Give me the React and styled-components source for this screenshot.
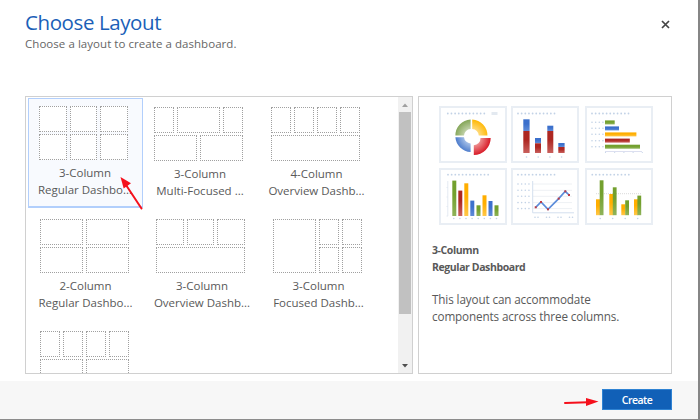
import React, { useState } from "react";
import styled, { createGlobalStyle } from "styled-components";

const GlobalStyle = createGlobalStyle`
  * {
    box-sizing: border-box;
  }
  body {
    margin: 0;
    overflow: hidden;
    font-family: "Open Sans", "Noto Sans", sans-serif;
    color: #595959;
  }
`;

const Dialog = styled.div`
  width: 700px;
  height: 420px;
  display: flex;
  flex-direction: column;
  background-color: white;
  border-right: 2px solid #868686;
  border-bottom: 1px solid #8c8c8c;
`;

const Header = styled.header`
  height: 96px;
  display: flex;
  justify-content: space-between;
  align-items: flex-start;
  padding: 8px 28px 0 25px;
`;

const Title = styled.h1`
  margin: 0;
  font-size: 20.5px;
  line-height: 28px;
  font-weight: 400;
  letter-spacing: -0.4px;
  color: #1b5fb8;
`;

const Subtitle = styled.p`
  margin: 0;
  font-size: 11.5px;
  line-height: 16px;
  letter-spacing: 0.05px;
  color: #666;
`;

const CloseButton = styled.button`
  width: 9px;
  height: 9px;
  margin-top: 12px;
  padding: 0;
  border: none;
  background: none;
  display: flex;
  cursor: pointer;
`;

const Content = styled.main`
  height: 278px;
  display: flex;
  gap: 5px;
  padding-left: 25px;
`;

const ListPanel = styled.section`
  width: 388px;
  display: flex;
  overflow: hidden;
  border: 1px solid #d0d0d0;
`;

const LayoutGrid = styled.div`
  flex: 1;
  display: grid;
  grid-template-columns: repeat(3, 116.5px);
  grid-auto-rows: 112px;
  padding: 1px 0 0 2px;
`;

const LayoutItem = styled.div`
  width: 115px;
  height: 110px;
  display: flex;
  flex-direction: column;
  align-items: center;
  padding-top: ${(props) => (props.selected ? "7px" : "9px")};
  padding-right: ${(props) => (props.selected ? "1px" : "0")};
  border: ${(props) => (props.selected ? "1px solid #b2cffc" : "none")};
  border-bottom-width: ${(props) => (props.selected ? "2px" : "0")};
  background-color: ${(props) => (props.selected ? "#f8fafe" : "transparent")};
  cursor: pointer;

  &:nth-child(2),
  &:nth-child(3) {
    padding-right: 4px;
  }
`;

const Thumb = styled.div`
  width: 89px;
  height: 54px;
  margin-right: 3px;
  flex-shrink: 0;
  display: grid;
  grid-template-columns: repeat(12, 1fr);
  grid-template-rows: 26px 26px;
  gap: 2px 3px;
`;

const Cell = styled.div`
  grid-column: span ${(props) => props.cols};
  grid-row: span ${(props) => props.rows || 1};
  border: 1px dotted #a0a0a0;
  background-color: white;
`;

const ItemLabel = styled.div`
  margin-top: 5px;
  font-size: 11.5px;
  line-height: 16.5px;
  text-align: center;
  white-space: nowrap;
`;

const Scrollbar = styled.div`
  width: 14px;
  display: flex;
  flex-direction: column;
  align-items: center;
  background-color: #f1f1f1;
`;

const ScrollArrow = styled.div`
  width: 14px;
  height: 15px;
  display: flex;
  align-items: center;
  justify-content: center;
`;

const ScrollThumb = styled.div`
  width: 12px;
  height: 202px;
  margin-bottom: auto;
  background-color: #c1c1c1;
`;

const PreviewPanel = styled.section`
  width: 254px;
  border: 1px solid #d0d0d0;
  padding: 9px 0 0 13px;
`;

const ChartGrid = styled.div`
  margin-left: 7px;
  display: grid;
  grid-template-columns: 68px 69.5px 68px;
  gap: 5px 4px;
`;

const ChartTile = styled.div`
  width: 68px;
  height: 57px;
  border: 2px solid #e9eef4;
  svg {
    display: block;
  }
`;

const PreviewTitle = styled.h2`
  margin: 17px 0 0;
  font-size: 10.5px;
  line-height: 16.5px;
  font-weight: 700;
  letter-spacing: -0.4px;
`;

const Description = styled.p`
  margin: 16px 0 0;
  font-size: 11.7px;
  line-height: 16.5px;
  letter-spacing: -0.12px;
`;

const Footer = styled.footer`
  margin-top: auto;
  height: 38px;
  padding: 8px 26px 0 0;
  display: flex;
  justify-content: flex-end;
  background-color: #f7f7f7;
`;

const CreateButton = styled.button`
  width: 70px;
  height: 21px;
  padding: 1px 0 0;
  border: 1px solid #2f83d3;
  background-color: #1160b7;
  color: white;
  font-family: inherit;
  font-size: 10.5px;
  line-height: 18px;
  font-weight: 600;
  letter-spacing: -0.5px;
  cursor: pointer;
`;

const Pointers = styled.svg`
  position: absolute;
  top: 0;
  left: 0;
  pointer-events: none;
`;

const layouts = [
  { name: "3-Column", type: "Regular Dashboard", short: "Regular Dashbo...", cells: [4, 4, 4, 4, 4, 4] },
  { name: "3-Column", type: "Multi-Focused Dashboard", short: "Multi-Focused ...", cells: [3, 6, 3, 6, 6] },
  { name: "4-Column", type: "Overview Dashboard", short: "Overview Dashb...", cells: [3, 3, 3, 3, 12] },
  { name: "2-Column", type: "Regular Dashboard", short: "Regular Dashbo...", cells: [6, 6, 6, 6] },
  { name: "3-Column", type: "Overview Dashboard", short: "Overview Dashb...", cells: [4, 4, 4, 12] },
  { name: "3-Column", type: "Focused Dashboard", short: "Focused Dashb...", cells: [[6, 2], 3, 3, 3, 3] },
  { name: "", type: "", short: "", cells: [3, 3, 3, 3, 6, 6] },
];

const GREEN = "url(#green)";
const RED = "url(#red)";
const BLUE = "url(#blue)";
const YELLOW = "url(#yellow)";

const Dots = ({ x, y, n, step = 3.65, r = 0.9 }) =>
  Array.from({ length: n }, (_, i) => (
    <circle key={i} cx={x + i * step} cy={y} r={r} fill="#c2d2e6" />
  ));

const Bars = ({ data }) =>
  data.map(([x, y, w, h, fill], i) => (
    <rect key={i} x={x} y={y} width={w} height={h} fill={fill} />
  ));

const Chart = ({ children }) => (
  <ChartTile>
    <svg width="64" height="53" viewBox="2 2 64 53">
      {children}
    </svg>
  </ChartTile>
);

const Gradients = () => (
  <defs>
    {[
      ["green", "#73a02e", "#8fb35a"],
      ["red", "#ad2722", "#c9605d"],
      ["blue", "#3c70cc", "#5f8cd8"],
      ["yellow", "#ffae00", "#ffc74a"],
    ].map(([id, from, to]) => (
      <linearGradient key={id} id={id} x1="0" y1="0" x2="0" y2="1">
        <stop offset="0.4" stopColor={from} />
        <stop offset="1" stopColor={to} />
      </linearGradient>
    ))}
    {[
      ["ringGreen", "#c6d5b0", "#86a75a", 32.2, 30],
      ["ringYellow", "#ffdc80", "#ffb908", 33.2, 30],
      ["ringBlue", "#a6c0e8", "#4878ca", 32.2, 31],
      ["ringRed", "#ee9090", "#d9202c", 35, 32.5],
    ].map(([id, from, to, cx, cy]) => (
      <radialGradient key={id} id={id} gradientUnits="userSpaceOnUse" cx={cx} cy={cy} r="16">
        <stop offset="0.4" stopColor={from} />
        <stop offset="1" stopColor={to} />
      </radialGradient>
    ))}
  </defs>
);

const DonutChart = () => (
  <Chart>
    <Gradients />
    <Dots x={8.8} y={7.5} n={11} />
    <rect x="52.5" y="6" width="6" height="3" fill="#e3e9f0" />
    <path d="M31.6 13.4A16 16 0 0 0 16.4 29.6H25A7 7 0 0 1 31.6 23Z" fill="url(#ringGreen)" />
    <path d="M33.2 13.4A16 16 0 0 1 48.4 29.6H39.8A7 7 0 0 0 33.2 23Z" fill="url(#ringYellow)" />
    <path d="M16.4 31.2A16 16 0 0 0 31.6 46V37.4A7 7 0 0 1 25 31.2Z" fill="url(#ringBlue)" />
    <path d="M51.7 32A17 17 0 0 1 34.8 49V39.2A7 7 0 0 0 41.5 32Z" fill="url(#ringRed)" />
  </Chart>
);

const StackedChart = () => (
  <Chart>
    <Dots x={7} y={7.5} n={11} />
    <Bars
      data={[
        [12.3, 13.3, 6.3, 11.7, BLUE],
        [12.3, 25, 6.3, 22, RED],
        [24, 32, 6, 5.3, BLUE],
        [24, 37.3, 6, 9.7, RED],
        [36.3, 19.7, 6, 5.3, BLUE],
        [36.3, 25, 6, 22, RED],
        [47.3, 37, 6.3, 4, BLUE],
        [47.3, 41, 6.3, 6, RED],
      ]}
    />
    <Dots x={15.5} y={51} n={4} step={11.7} r={0.8} />
  </Chart>
);

const HorizontalChart = () => (
  <Chart>
    <Dots x={7} y={7.5} n={11} />
    {[16.3, 22.3, 28.3, 34.7, 40.7].map((y) => (
      <Dots key={y} x={7} y={y} n={4} r={0.8} />
    ))}
    <Bars
      data={[
        [20, 14.4, 9.7, 4, GREEN],
        [20, 20.4, 14, 4, BLUE],
        [20, 26.4, 31.4, 4, YELLOW],
        [20, 32.6, 24.8, 4, RED],
        [20, 38.7, 35, 4, GREEN],
        [20, 45, 37, 1, "#dcdff0"],
      ]}
    />
    <Dots x={20.5} y={46.5} n={5} step={9.2} r={0.6} />
  </Chart>
);

const ColumnChart = () => (
  <Chart>
    <Dots x={9} y={6.7} n={12} />
    <path d="M8.8 13V48M7.5 19.5H9M7.5 29H9M7.5 38.5H9M7.5 48H9" stroke="#e4eaf2" />
    <Bars
      data={[
        [13.3, 12.6, 4, 35.4, GREEN],
        [19.3, 22.6, 4, 25.4, RED],
        [25.3, 15.3, 4, 32.7, YELLOW],
        [31.3, 32.6, 4, 15.4, BLUE],
        [37.5, 37.3, 4, 10.7, GREEN],
        [43.5, 27.3, 4, 20.7, YELLOW],
        [49.5, 33, 4, 15, BLUE],
        [55.5, 37.3, 4, 10.7, GREEN],
      ]}
    />
    <Dots x={14.8} y={50.5} n={8} step={6.1} r={0.8} />
  </Chart>
);

const linePoints = [
  [24.7, 39.3],
  [30, 34],
  [37, 41.3],
  [47.7, 30.6],
  [54.3, 23.3],
  [58, 27],
];

const LineChart = () => (
  <Chart>
    <Dots x={7} y={6.7} n={11} />
    {[16, 22.3, 28.3, 34.6, 40.6].map((y) => (
      <React.Fragment key={y}>
        <Dots x={7} y={y} n={4} r={0.8} />
        <path d={`M22 ${y}H61`} stroke="#eef1f4" />
      </React.Fragment>
    ))}
    <path d="M21.7 13V44.8H63" fill="none" stroke="#d3dfee" />
    <polyline points={linePoints.join(" ")} fill="none" stroke="#5b8cda" strokeWidth="1.7" />
    {linePoints.map(([x, y]) => (
      <rect key={x} x={x - 1} y={y - 1} width="2" height="2" fill="#bd3c46" />
    ))}
    {[24, 35.5, 47, 58.5].map((x) => (
      <Dots key={x} x={x} y={49.2} n={2} step={3} r={0.8} />
    ))}
  </Chart>
);

const GroupedChart = () => (
  <Chart>
    <Dots x={7.3} y={6.7} n={11} />
    <path d="M11 25.7H57" stroke="#d0d0d0" strokeWidth="0.8" strokeDasharray="1 1" />
    <Bars
      data={[
        [11, 31.3, 4, 15.9, YELLOW],
        [14.7, 12.3, 3.8, 34.9, GREEN],
        [24.3, 26, 4, 21.2, YELLOW],
        [27.8, 19.3, 3.8, 27.9, GREEN],
        [36.3, 36.3, 4, 10.9, YELLOW],
        [40.2, 32.3, 3.8, 14.9, GREEN],
        [49, 31.3, 4, 15.9, YELLOW],
        [52.4, 27.6, 3.8, 19.6, GREEN],
      ]}
    />
    <Dots x={15.2} y={50.5} n={4} step={12.5} r={0.8} />
  </Chart>
);

const App = () => {
  const [selected, setSelected] = useState(0);
  const current = layouts[selected];

  return (
    <>
      <GlobalStyle />
      <Dialog>
        <Header>
          <div>
            <Title>Choose Layout</Title>
            <Subtitle>Choose a layout to create a dashboard.</Subtitle>
          </div>
          <CloseButton aria-label="Close">
            <svg width="9" height="9" viewBox="0 0 9 9">
              <path d="M1 1L8 8M8 1L1 8" stroke="#444" strokeWidth="1.7" />
            </svg>
          </CloseButton>
        </Header>
        <Content>
          <ListPanel>
            <LayoutGrid>
              {layouts.map((item, i) => (
                <LayoutItem key={i} selected={i === selected} onClick={() => setSelected(i)}>
                  <Thumb>
                    {item.cells.map((cell, j) => {
                      const [cols, rows] = [].concat(cell);
                      return <Cell key={j} cols={cols} rows={rows} />;
                    })}
                  </Thumb>
                  <ItemLabel>
                    {item.name}
                    <br />
                    {item.short}
                  </ItemLabel>
                </LayoutItem>
              ))}
            </LayoutGrid>
            <Scrollbar>
              <ScrollArrow>
                <svg width="6" height="4" viewBox="0 0 6 4">
                  <path d="M0 4L3 0.5L6 4Z" fill="#a0a0a0" />
                </svg>
              </ScrollArrow>
              <ScrollThumb />
              <ScrollArrow>
                <svg width="6" height="4" viewBox="0 0 6 4">
                  <path d="M0 0L3 3.5L6 0Z" fill="#505050" />
                </svg>
              </ScrollArrow>
            </Scrollbar>
          </ListPanel>
          <PreviewPanel>
            <ChartGrid>
              <DonutChart />
              <StackedChart />
              <HorizontalChart />
              <ColumnChart />
              <LineChart />
              <GroupedChart />
            </ChartGrid>
            <PreviewTitle>
              {current.name}
              <br />
              {current.type}
            </PreviewTitle>
            <Description>
              This layout can accommodate
              <br />
              components across three columns.
            </Description>
          </PreviewPanel>
        </Content>
        <Footer>
          <CreateButton>Create</CreateButton>
        </Footer>
      </Dialog>
      <Pointers width="700" height="420" viewBox="0 0 700 420">
        <g stroke="#f5101c" strokeWidth="2" strokeLinecap="round">
          <path d="M126 185L141.5 208.5" />
          <path d="M565 403L588 402.2" />
        </g>
        <path d="M120.5 177L123.7 188.5L131 183.3Z" fill="#f5101c" />
        <path d="M598.5 401.6L586 398V406Z" fill="#f5101c" />
      </Pointers>
    </>
  );
};

export default App;
